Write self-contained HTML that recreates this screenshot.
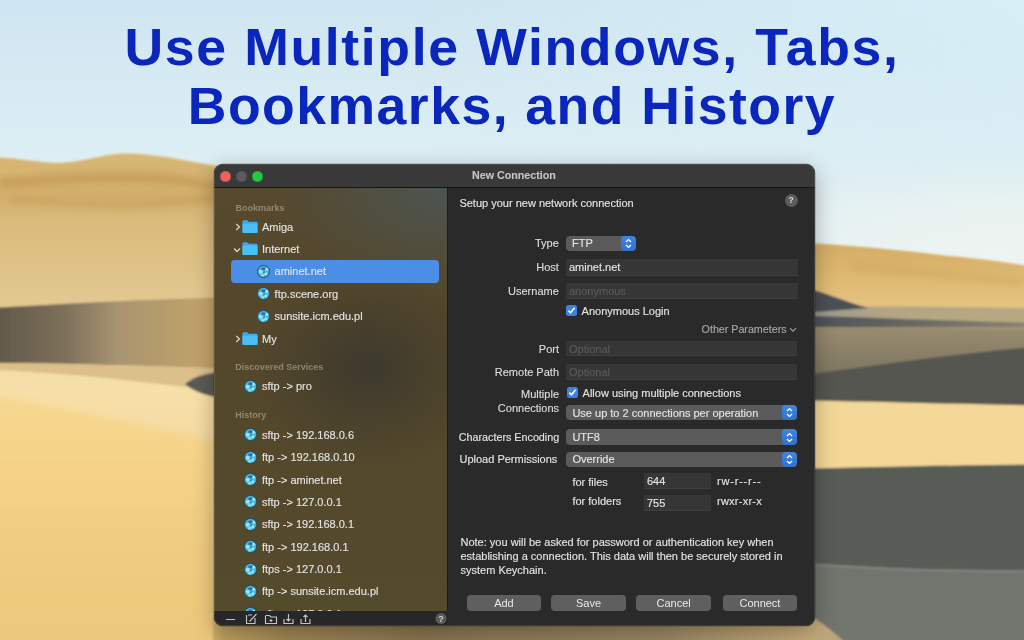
<!DOCTYPE html>
<html><head><meta charset="utf-8">
<style>
*{margin:0;padding:0;box-sizing:border-box}
html,body{width:1024px;height:640px;overflow:hidden}
body{position:relative;font-family:"Liberation Sans",sans-serif;background:#d8e8ee}
#bg{position:absolute;left:0;top:0;width:1024px;height:640px}
.title{position:absolute;left:0;width:1024px;text-align:center;font-weight:bold;font-size:51px;line-height:60px;color:#0a26bc;transform-origin:513px 0;white-space:nowrap}
#win{position:absolute;left:214px;top:164px;will-change:transform;width:601px;height:462px;border-radius:9px;overflow:hidden;background:#2a2a2a;box-shadow:0 6px 22px rgba(0,0,0,.3),0 0 0 0.5px rgba(0,0,0,.3)}
#win::after{content:"";position:absolute;left:0;top:0;right:0;bottom:0;border-radius:9px;box-shadow:inset 0 0 0 1px rgba(255,255,255,.1);pointer-events:none}
#tb{position:absolute;left:0;top:0;width:601px;height:24px;background:#3a393a;border-bottom:1px solid #161616}
.tl{position:absolute;top:6.5px;width:11px;height:11px;border-radius:50%}
#side{position:absolute;left:0;top:24px;width:234px;height:423px;border-right:1px solid #1c1c1a;background:radial-gradient(ellipse 120px 100px at 155px 180px,rgba(58,55,46,.9),rgba(58,55,46,.4) 50%,rgba(58,55,46,0)),radial-gradient(ellipse 170px 110px at 230px 0px,rgba(76,84,80,1),rgba(76,84,80,0)),linear-gradient(#56492e,#54472b 120px,#544a2c 424px)}
#sbar{position:absolute;left:0;top:447px;width:234px;height:15px;background:#272629}
#content{position:absolute;left:234px;top:24px;width:367px;height:438px;background:#2a2a2a}
.t{position:absolute;white-space:nowrap;font-size:11px;line-height:14px;color:#e2e2e2;-webkit-text-stroke:0.15px currentColor}
.lb{text-align:right;color:#dcdcdc}
.hdr{position:absolute;white-space:nowrap;font-size:9px;font-weight:bold;line-height:12px;color:rgba(190,185,170,.55)}
.ic{position:absolute;line-height:0}
.sel{position:absolute;background:#4a8ee6;border-radius:4px}
.fld{position:absolute;background:#363636;box-shadow:inset 0 -1px 0 #3f3f3f}
.pop{position:absolute;background:#5b5b5b;border-radius:4px;overflow:hidden}
.step{position:absolute;right:0;top:0;width:15px;height:100%;background:linear-gradient(#3f86e2,#3270cc);border-radius:4px}
.btn{position:absolute;background:#5f5f5f;border-radius:4px;color:#e8e8e8;font-size:11px;line-height:16px;text-align:center}
.help{position:absolute;width:13px;height:13px;border-radius:50%;background:#5c5c5c;color:#d8d8d8;font-size:9px;font-weight:bold;line-height:13px;text-align:center}
</style></head><body>
<svg id="bg" width="1024" height="640" viewBox="0 0 1024 640">
<defs>
<linearGradient id="sky" x1="0" y1="0" x2="0" y2="640" gradientUnits="userSpaceOnUse">
<stop offset="0" stop-color="#cfe5f1"/><stop offset="0.22" stop-color="#dbeef4"/><stop offset="0.42" stop-color="#e8f2f2"/><stop offset="1" stop-color="#eef3ee"/>
</linearGradient>
<linearGradient id="ldune" x1="0" y1="150" x2="0" y2="305" gradientUnits="userSpaceOnUse">
<stop offset="0" stop-color="#d8b876"/><stop offset="0.15" stop-color="#d6b472"/><stop offset="0.3" stop-color="#d2ae6a"/><stop offset="0.45" stop-color="#dabb7c"/><stop offset="0.75" stop-color="#dfc286"/><stop offset="1" stop-color="#e2c892"/>
</linearGradient>
<filter id="bl3" x="-20%" y="-50%" width="140%" height="200%"><feGaussianBlur stdDeviation="3"/></filter>
<linearGradient id="lshadow" x1="0" y1="0" x2="214" y2="0" gradientUnits="userSpaceOnUse">
<stop offset="0" stop-color="#625a4a"/><stop offset="0.3" stop-color="#7c705a"/><stop offset="0.55" stop-color="#a89470"/><stop offset="1" stop-color="#c4a468"/>
</linearGradient>
<linearGradient id="lsand" x1="0" y1="365" x2="0" y2="640" gradientUnits="userSpaceOnUse">
<stop offset="0" stop-color="#f2dca6"/><stop offset="0.1" stop-color="#f6e0a8"/><stop offset="0.45" stop-color="#f2d49a"/><stop offset="1" stop-color="#eaca7c"/>
</linearGradient>
<linearGradient id="rdune" x1="0" y1="243" x2="0" y2="308" gradientUnits="userSpaceOnUse">
<stop offset="0" stop-color="#d4ac66"/><stop offset="0.5" stop-color="#ddb870"/><stop offset="1" stop-color="#e4c482"/>
</linearGradient>
<linearGradient id="rgray" x1="0" y1="326" x2="0" y2="380" gradientUnits="userSpaceOnUse">
<stop offset="0" stop-color="#9a8c70"/><stop offset="1" stop-color="#7a7460"/>
</linearGradient>
<linearGradient id="bstrip" x1="190" y1="0" x2="860" y2="0" gradientUnits="userSpaceOnUse">
<stop offset="0" stop-color="#e6c47c"/><stop offset="0.05" stop-color="#c0a060"/><stop offset="0.15" stop-color="#a08654"/><stop offset="0.35" stop-color="#8a7650"/><stop offset="0.7" stop-color="#9a8862"/><stop offset="0.92" stop-color="#c8ac7a"/><stop offset="1" stop-color="#b0a080"/>
</linearGradient>
<linearGradient id="rstreak" x1="815" y1="0" x2="1024" y2="0" gradientUnits="userSpaceOnUse"><stop offset="0" stop-color="#4e5258"/><stop offset="0.5" stop-color="#6a6a64"/><stop offset="1" stop-color="#8a8270"/></linearGradient>
<linearGradient id="rband" x1="815" y1="0" x2="1024" y2="0" gradientUnits="userSpaceOnUse"><stop offset="0" stop-color="#9a9890"/><stop offset="0.35" stop-color="#b4a684"/><stop offset="1" stop-color="#b8a882"/></linearGradient>
<linearGradient id="skyh" x1="0" y1="0" x2="1024" y2="0" gradientUnits="userSpaceOnUse"><stop offset="0.4" stop-color="#d8eef6" stop-opacity="0"/><stop offset="1" stop-color="#d8eef6" stop-opacity="1"/></linearGradient>
<linearGradient id="skymg" x1="0" y1="0" x2="0" y2="200" gradientUnits="userSpaceOnUse"><stop offset="0" stop-color="#fff"/><stop offset="1" stop-color="#000"/></linearGradient>
<mask id="skym"><rect x="0" y="0" width="1024" height="200" fill="url(#skymg)"/></mask>
<radialGradient id="skyw"><stop offset="0" stop-color="#eef4f0" stop-opacity="1"/><stop offset="1" stop-color="#eef4f0" stop-opacity="0"/></radialGradient>
<linearGradient id="lsand2" x1="0" y1="400" x2="0" y2="640" gradientUnits="userSpaceOnUse"><stop offset="0" stop-color="#f6d890"/><stop offset="0.2" stop-color="#f6d48a"/><stop offset="0.6" stop-color="#f0cc80"/><stop offset="1" stop-color="#ecc87c"/></linearGradient>
<filter id="bl" x="-5%" y="-5%" width="110%" height="110%"><feGaussianBlur stdDeviation="1"/></filter>
</defs>
<rect width="1024" height="640" fill="url(#sky)"/>
<rect x="0" y="0" width="1024" height="200" fill="url(#skyh)" mask="url(#skym)"/>
<ellipse cx="1000" cy="250" rx="260" ry="90" fill="url(#skyw)"/>
<g filter="url(#bl)">
<path d="M-10,157 C20,158 40,163 60,163 C90,161 105,153 128,153.5 C160,154 190,162 240,170 L240,650 L-10,650Z" fill="url(#ldune)"/>
<g filter="url(#bl3)" opacity="0.55">
<path d="M0,178 C50,174 100,170 150,172 C180,174 200,180 220,184 L220,190 C190,186 160,182 120,182 C80,182 40,186 0,188Z" fill="#c09050"/>
<path d="M10,196 C60,200 110,204 150,200 C180,198 200,196 220,196 L220,202 C190,204 150,210 100,208 C60,206 30,204 10,202Z" fill="#c49a58"/>
</g>
<path d="M-10,308 C60,304 150,299 240,297 L240,369 C150,366 60,363 -10,363Z" fill="url(#lshadow)"/>
<path d="M-10,363 C60,363 150,366 240,369 L240,650 L-10,650Z" fill="#dcc08a"/>
<path d="M-10,370 C60,372 150,382 240,394 L240,650 L-10,650Z" fill="url(#lsand)"/>
<path d="M-10,394 C60,406 150,428 240,446 L240,650 L-10,650Z" fill="url(#lsand2)" filter="url(#bl3)"/>
<path d="M185,384 C195,376 205,372 240,371 L240,400 C215,399 195,393 185,384Z" fill="#5c5a56"/>
<path d="M790,242 C850,245 900,250 950,256 C980,259 1000,261 1034,267 L1034,650 L790,650Z" fill="url(#rdune)"/>
<g filter="url(#bl3)" opacity="0.3"><path d="M850,262 C900,266 960,272 1024,280 L1024,286 C960,280 900,274 850,270Z" fill="#c09858"/></g>
<path d="M790,307 C880,306 960,307 1034,308 L1034,650 L790,650Z" fill="url(#rband)"/>
<path d="M790,284 C820,290 840,300 868,308 L790,314Z" fill="#4c5056"/>
<path d="M790,315 C880,318 960,321 1034,323 L1034,328 C960,327 880,327 790,328Z" fill="url(#rstreak)"/>
<path d="M790,327 C880,327 960,328 1034,329 L1034,650 L790,650Z" fill="url(#rgray)"/>
<path d="M790,377 C880,365 960,353 1034,347 L1034,650 L790,650Z" fill="#54564f"/>
<path d="M790,400 C880,402 960,404 1034,405.5 L1034,650 L790,650Z" fill="#f4d898"/>
<path d="M790,469 C880,467 960,465 1034,464.5 L1034,650 L790,650Z" fill="#595b56"/>
<path d="M790,562 C850,566 900,570 1034,570.5 L1034,650 L790,650Z" fill="#72746e"/>
<path d="M790,563 C850,567 900,571 1034,571.5" stroke="#828680" stroke-width="2" fill="none"/>

<path d="M213,616 L812,616 C822,624 836,632 852,650 L213,650Z" fill="url(#bstrip)"/>
</g>
</svg>

<div class="title" style="top:17px;font-size:52px;letter-spacing:1.6px;transform:scaleX(1.03)">Use Multiple Windows, Tabs,</div>
<div class="title" style="top:77px;letter-spacing:1.4px;transform:scaleX(1.05)">Bookmarks, and History</div>
<div id="win">
  <div id="side"></div>
  <div id="content"></div>
  <div class="sel" style="left:17.0px;top:96.0px;width:208.0px;height:22.5px;"></div><div class="hdr" style="left:21.6px;top:37.6px">Bookmarks</div><div class="ic" style="left:20.599999999999994px;top:58.8px"><svg width="6" height="8" viewBox="0 0 6 8"><path d="M1.2,1 L4.5,4 L1.2,7" stroke="#d8d4c8" stroke-width="1.3" fill="none"/></svg></div><div class="ic" style="left:28.19999999999999px;top:55.8px"><svg width="16" height="14" viewBox="0 0 16 14"><path d="M0.5,1.6 Q0.5,0.3 1.7,0.3 L5.4,0.3 L6.8,1.7 L14.2,1.7 Q15.5,1.7 15.5,3 L15.5,12 Q15.5,13 14.5,13 L1.5,13 Q0.5,13 0.5,12Z" fill="#3aa6e6"/><path d="M0.5,3.4 L15.5,3.4 L15.5,12 Q15.5,13 14.5,13 L1.5,13 Q0.5,13 0.5,12Z" fill="#4cc0f6"/></svg></div><div class="t" style="left:48.0px;top:55.8px;">Amiga</div><div class="ic" style="left:18.80000000000001px;top:83.0px"><svg width="8" height="6" viewBox="0 0 8 6"><path d="M1,1.5 L4,4.5 L7,1.5" stroke="#d8d4c8" stroke-width="1.3" fill="none"/></svg></div><div class="ic" style="left:28.19999999999999px;top:78.2px"><svg width="16" height="14" viewBox="0 0 16 14"><path d="M0.5,1.6 Q0.5,0.3 1.7,0.3 L5.4,0.3 L6.8,1.7 L14.2,1.7 Q15.5,1.7 15.5,3 L15.5,12 Q15.5,13 14.5,13 L1.5,13 Q0.5,13 0.5,12Z" fill="#3aa6e6"/><path d="M0.5,3.4 L15.5,3.4 L15.5,12 Q15.5,13 14.5,13 L1.5,13 Q0.5,13 0.5,12Z" fill="#4cc0f6"/></svg></div><div class="t" style="left:48.0px;top:78.2px;">Internet</div><div class="ic" style="left:42.5px;top:100.7px"><svg width="13" height="13" viewBox="0 0 13 13"><circle cx="6.5" cy="6.5" r="6.1" fill="#4cb4d8" stroke="#1e4a56" stroke-width="0.9"/><circle cx="3.8" cy="6.8" r="2" fill="#96e4fa"/><circle cx="9.6" cy="4.2" r="1.5" fill="#a0ecfa"/><circle cx="8.6" cy="8.8" r="1.7" fill="#8ee6f0"/><circle cx="5.6" cy="10.2" r="1.4" fill="#90e0ee"/><ellipse cx="6.4" cy="3.8" rx="2.2" ry="1.5" fill="#2a6ec4"/><circle cx="7.2" cy="7.2" r="1" fill="#2a8aa8"/></svg></div><div class="t" style="left:60.6px;top:100.2px;">aminet.net</div><div class="ic" style="left:42.5px;top:123.3px"><svg width="13" height="13" viewBox="0 0 13 13"><circle cx="6.5" cy="6.5" r="6.1" fill="#4cb4d8" stroke="#1e4a56" stroke-width="0.9"/><circle cx="3.8" cy="6.8" r="2" fill="#96e4fa"/><circle cx="9.6" cy="4.2" r="1.5" fill="#a0ecfa"/><circle cx="8.6" cy="8.8" r="1.7" fill="#8ee6f0"/><circle cx="5.6" cy="10.2" r="1.4" fill="#90e0ee"/><ellipse cx="6.4" cy="3.8" rx="2.2" ry="1.5" fill="#2a6ec4"/><circle cx="7.2" cy="7.2" r="1" fill="#2a8aa8"/></svg></div><div class="t" style="left:60.6px;top:122.8px;">ftp.scene.org</div><div class="ic" style="left:42.5px;top:145.7px"><svg width="13" height="13" viewBox="0 0 13 13"><circle cx="6.5" cy="6.5" r="6.1" fill="#4cb4d8" stroke="#1e4a56" stroke-width="0.9"/><circle cx="3.8" cy="6.8" r="2" fill="#96e4fa"/><circle cx="9.6" cy="4.2" r="1.5" fill="#a0ecfa"/><circle cx="8.6" cy="8.8" r="1.7" fill="#8ee6f0"/><circle cx="5.6" cy="10.2" r="1.4" fill="#90e0ee"/><ellipse cx="6.4" cy="3.8" rx="2.2" ry="1.5" fill="#2a6ec4"/><circle cx="7.2" cy="7.2" r="1" fill="#2a8aa8"/></svg></div><div class="t" style="left:60.6px;top:145.2px;">sunsite.icm.edu.pl</div><div class="ic" style="left:20.599999999999994px;top:170.8px"><svg width="6" height="8" viewBox="0 0 6 8"><path d="M1.2,1 L4.5,4 L1.2,7" stroke="#d8d4c8" stroke-width="1.3" fill="none"/></svg></div><div class="ic" style="left:28.19999999999999px;top:167.8px"><svg width="16" height="14" viewBox="0 0 16 14"><path d="M0.5,1.6 Q0.5,0.3 1.7,0.3 L5.4,0.3 L6.8,1.7 L14.2,1.7 Q15.5,1.7 15.5,3 L15.5,12 Q15.5,13 14.5,13 L1.5,13 Q0.5,13 0.5,12Z" fill="#3aa6e6"/><path d="M0.5,3.4 L15.5,3.4 L15.5,12 Q15.5,13 14.5,13 L1.5,13 Q0.5,13 0.5,12Z" fill="#4cc0f6"/></svg></div><div class="t" style="left:48.0px;top:167.8px;">My</div><div class="hdr" style="left:21.3px;top:196.8px">Discovered Services</div><div class="ic" style="left:29.8px;top:215.9px"><svg width="13" height="13" viewBox="0 0 13 13"><circle cx="6.5" cy="6.5" r="6.1" fill="#4cb4d8" stroke="#1e4a56" stroke-width="0.9"/><circle cx="3.8" cy="6.8" r="2" fill="#96e4fa"/><circle cx="9.6" cy="4.2" r="1.5" fill="#a0ecfa"/><circle cx="8.6" cy="8.8" r="1.7" fill="#8ee6f0"/><circle cx="5.6" cy="10.2" r="1.4" fill="#90e0ee"/><ellipse cx="6.4" cy="3.8" rx="2.2" ry="1.5" fill="#2a6ec4"/><circle cx="7.2" cy="7.2" r="1" fill="#2a8aa8"/></svg></div><div class="t" style="left:48.0px;top:215.4px;">sftp -&gt; pro</div><div class="hdr" style="left:21.3px;top:245.0px">History</div><div class="ic" style="left:29.8px;top:264.2px"><svg width="13" height="13" viewBox="0 0 13 13"><circle cx="6.5" cy="6.5" r="6.1" fill="#4cb4d8" stroke="#1e4a56" stroke-width="0.9"/><circle cx="3.8" cy="6.8" r="2" fill="#96e4fa"/><circle cx="9.6" cy="4.2" r="1.5" fill="#a0ecfa"/><circle cx="8.6" cy="8.8" r="1.7" fill="#8ee6f0"/><circle cx="5.6" cy="10.2" r="1.4" fill="#90e0ee"/><ellipse cx="6.4" cy="3.8" rx="2.2" ry="1.5" fill="#2a6ec4"/><circle cx="7.2" cy="7.2" r="1" fill="#2a8aa8"/></svg></div><div class="t" style="left:48.0px;top:263.7px;">sftp -&gt; 192.168.0.6</div><div class="ic" style="left:29.8px;top:286.6px"><svg width="13" height="13" viewBox="0 0 13 13"><circle cx="6.5" cy="6.5" r="6.1" fill="#4cb4d8" stroke="#1e4a56" stroke-width="0.9"/><circle cx="3.8" cy="6.8" r="2" fill="#96e4fa"/><circle cx="9.6" cy="4.2" r="1.5" fill="#a0ecfa"/><circle cx="8.6" cy="8.8" r="1.7" fill="#8ee6f0"/><circle cx="5.6" cy="10.2" r="1.4" fill="#90e0ee"/><ellipse cx="6.4" cy="3.8" rx="2.2" ry="1.5" fill="#2a6ec4"/><circle cx="7.2" cy="7.2" r="1" fill="#2a8aa8"/></svg></div><div class="t" style="left:48.0px;top:286.1px;">ftp -&gt; 192.168.0.10</div><div class="ic" style="left:29.8px;top:309.0px"><svg width="13" height="13" viewBox="0 0 13 13"><circle cx="6.5" cy="6.5" r="6.1" fill="#4cb4d8" stroke="#1e4a56" stroke-width="0.9"/><circle cx="3.8" cy="6.8" r="2" fill="#96e4fa"/><circle cx="9.6" cy="4.2" r="1.5" fill="#a0ecfa"/><circle cx="8.6" cy="8.8" r="1.7" fill="#8ee6f0"/><circle cx="5.6" cy="10.2" r="1.4" fill="#90e0ee"/><ellipse cx="6.4" cy="3.8" rx="2.2" ry="1.5" fill="#2a6ec4"/><circle cx="7.2" cy="7.2" r="1" fill="#2a8aa8"/></svg></div><div class="t" style="left:48.0px;top:308.5px;">ftp -&gt; aminet.net</div><div class="ic" style="left:29.8px;top:331.4px"><svg width="13" height="13" viewBox="0 0 13 13"><circle cx="6.5" cy="6.5" r="6.1" fill="#4cb4d8" stroke="#1e4a56" stroke-width="0.9"/><circle cx="3.8" cy="6.8" r="2" fill="#96e4fa"/><circle cx="9.6" cy="4.2" r="1.5" fill="#a0ecfa"/><circle cx="8.6" cy="8.8" r="1.7" fill="#8ee6f0"/><circle cx="5.6" cy="10.2" r="1.4" fill="#90e0ee"/><ellipse cx="6.4" cy="3.8" rx="2.2" ry="1.5" fill="#2a6ec4"/><circle cx="7.2" cy="7.2" r="1" fill="#2a8aa8"/></svg></div><div class="t" style="left:48.0px;top:330.9px;">sftp -&gt; 127.0.0.1</div><div class="ic" style="left:29.8px;top:353.8px"><svg width="13" height="13" viewBox="0 0 13 13"><circle cx="6.5" cy="6.5" r="6.1" fill="#4cb4d8" stroke="#1e4a56" stroke-width="0.9"/><circle cx="3.8" cy="6.8" r="2" fill="#96e4fa"/><circle cx="9.6" cy="4.2" r="1.5" fill="#a0ecfa"/><circle cx="8.6" cy="8.8" r="1.7" fill="#8ee6f0"/><circle cx="5.6" cy="10.2" r="1.4" fill="#90e0ee"/><ellipse cx="6.4" cy="3.8" rx="2.2" ry="1.5" fill="#2a6ec4"/><circle cx="7.2" cy="7.2" r="1" fill="#2a8aa8"/></svg></div><div class="t" style="left:48.0px;top:353.3px;">sftp -&gt; 192.168.0.1</div><div class="ic" style="left:29.8px;top:376.1px"><svg width="13" height="13" viewBox="0 0 13 13"><circle cx="6.5" cy="6.5" r="6.1" fill="#4cb4d8" stroke="#1e4a56" stroke-width="0.9"/><circle cx="3.8" cy="6.8" r="2" fill="#96e4fa"/><circle cx="9.6" cy="4.2" r="1.5" fill="#a0ecfa"/><circle cx="8.6" cy="8.8" r="1.7" fill="#8ee6f0"/><circle cx="5.6" cy="10.2" r="1.4" fill="#90e0ee"/><ellipse cx="6.4" cy="3.8" rx="2.2" ry="1.5" fill="#2a6ec4"/><circle cx="7.2" cy="7.2" r="1" fill="#2a8aa8"/></svg></div><div class="t" style="left:48.0px;top:375.6px;">ftp -&gt; 192.168.0.1</div><div class="ic" style="left:29.8px;top:398.5px"><svg width="13" height="13" viewBox="0 0 13 13"><circle cx="6.5" cy="6.5" r="6.1" fill="#4cb4d8" stroke="#1e4a56" stroke-width="0.9"/><circle cx="3.8" cy="6.8" r="2" fill="#96e4fa"/><circle cx="9.6" cy="4.2" r="1.5" fill="#a0ecfa"/><circle cx="8.6" cy="8.8" r="1.7" fill="#8ee6f0"/><circle cx="5.6" cy="10.2" r="1.4" fill="#90e0ee"/><ellipse cx="6.4" cy="3.8" rx="2.2" ry="1.5" fill="#2a6ec4"/><circle cx="7.2" cy="7.2" r="1" fill="#2a8aa8"/></svg></div><div class="t" style="left:48.0px;top:398.0px;">ftps -&gt; 127.0.0.1</div><div class="ic" style="left:29.8px;top:420.9px"><svg width="13" height="13" viewBox="0 0 13 13"><circle cx="6.5" cy="6.5" r="6.1" fill="#4cb4d8" stroke="#1e4a56" stroke-width="0.9"/><circle cx="3.8" cy="6.8" r="2" fill="#96e4fa"/><circle cx="9.6" cy="4.2" r="1.5" fill="#a0ecfa"/><circle cx="8.6" cy="8.8" r="1.7" fill="#8ee6f0"/><circle cx="5.6" cy="10.2" r="1.4" fill="#90e0ee"/><ellipse cx="6.4" cy="3.8" rx="2.2" ry="1.5" fill="#2a6ec4"/><circle cx="7.2" cy="7.2" r="1" fill="#2a8aa8"/></svg></div><div class="t" style="left:48.0px;top:420.4px;">ftp -&gt; sunsite.icm.edu.pl</div><div class="ic" style="left:29.8px;top:443.3px"><svg width="13" height="13" viewBox="0 0 13 13"><circle cx="6.5" cy="6.5" r="6.1" fill="#4cb4d8" stroke="#1e4a56" stroke-width="0.9"/><circle cx="3.8" cy="6.8" r="2" fill="#96e4fa"/><circle cx="9.6" cy="4.2" r="1.5" fill="#a0ecfa"/><circle cx="8.6" cy="8.8" r="1.7" fill="#8ee6f0"/><circle cx="5.6" cy="10.2" r="1.4" fill="#90e0ee"/><ellipse cx="6.4" cy="3.8" rx="2.2" ry="1.5" fill="#2a6ec4"/><circle cx="7.2" cy="7.2" r="1" fill="#2a8aa8"/></svg></div><div class="t" style="left:48.0px;top:442.8px;">sftp -&gt; 127.0.0.1</div>
  <div class="t" style="left:245.4px;top:31.8px;">Setup your new network connection</div><div class="help" style="left:570.5px;top:29.5px">?</div><div class="t lb" style="right:256.2px;top:72.0px;">Type</div><div class="pop" style="left:352.0px;top:72.0px;width:69.5px;height:14.8px;"><div class="step"></div><svg width="15" height="15" viewBox="0 0 15 15" style="position:absolute;right:0;top:50%;margin-top:-7.5px"><path d="M5,6 L7.5,3.6 L10,6 M5,9 L7.5,11.4 L10,9" stroke="#fff" stroke-width="1.4" fill="none"/></svg></div><div class="t" style="left:358.0px;top:72.0px;">FTP</div><div class="t lb" style="right:256.2px;top:96.2px;">Host</div><div class="fld" style="left:352.0px;top:95.0px;width:232.0px;height:16.5px;"></div><div class="t" style="left:355.0px;top:96.2px;">aminet.net</div><div class="t lb" style="right:256.2px;top:119.6px;">Username</div><div class="fld" style="left:352.0px;top:118.8px;width:232.0px;height:15.8px;"></div><div class="t" style="left:355.0px;top:119.6px;color:#5a5a5a">anonymous</div><div class="ic" style="left:352px;top:141px"><svg width="11" height="11" viewBox="0 0 11 11"><rect x="0" y="0" width="11" height="11" rx="2.5" fill="#3b82e4"/><path d="M2.4,5.6 L4.5,7.8 L8.6,2.8" stroke="#fff" stroke-width="1.6" fill="none"/></svg></div><div class="t" style="left:367.6px;top:140.0px;">Anonymous Login</div><div class="t" style="left:487.6px;top:158.0px;color:#a6a6a6;font-size:10.7px">Other Parameters</div><div class="ic" style="left:575px;top:162.5px"><svg width="8" height="6" viewBox="0 0 8 6"><path d="M1,1.2 L4,4.2 L7,1.2" stroke="#a0a0a0" stroke-width="1.1" fill="none"/></svg></div><div class="t lb" style="right:256.0px;top:178.0px;">Port</div><div class="fld" style="left:352.0px;top:177.3px;width:231.0px;height:15.2px;"></div><div class="t" style="left:355.0px;top:178.0px;color:#5a5a5a">Optional</div><div class="t lb" style="right:256.0px;top:201.0px;">Remote Path</div><div class="fld" style="left:352.0px;top:200.0px;width:231.0px;height:15.5px;"></div><div class="t" style="left:355.0px;top:201.0px;color:#5a5a5a">Optional</div><div class="t lb" style="right:256.0px;top:222.7px;">Multiple</div><div class="t lb" style="right:256.0px;top:236.8px;">Connections</div><div class="ic" style="left:352.5px;top:223px"><svg width="11" height="11" viewBox="0 0 11 11"><rect x="0" y="0" width="11" height="11" rx="2.5" fill="#3b82e4"/><path d="M2.4,5.6 L4.5,7.8 L8.6,2.8" stroke="#fff" stroke-width="1.6" fill="none"/></svg></div><div class="t" style="left:368.6px;top:222.0px;">Allow using multiple connections</div><div class="pop" style="left:352.0px;top:241.3px;width:230.5px;height:15.2px;"><div class="step"></div><svg width="15" height="15" viewBox="0 0 15 15" style="position:absolute;right:0;top:50%;margin-top:-7.5px"><path d="M5,6 L7.5,3.6 L10,6 M5,9 L7.5,11.4 L10,9" stroke="#fff" stroke-width="1.4" fill="none"/></svg></div><div class="t" style="left:358.4px;top:241.6px;">Use up to 2 connections per operation</div><div class="t" style="left:244.8px;top:266.0px;font-size:10.75px">Characters Encoding</div><div class="pop" style="left:352.0px;top:265.3px;width:230.5px;height:15.5px;"><div class="step"></div><svg width="15" height="15" viewBox="0 0 15 15" style="position:absolute;right:0;top:50%;margin-top:-7.5px"><path d="M5,6 L7.5,3.6 L10,6 M5,9 L7.5,11.4 L10,9" stroke="#fff" stroke-width="1.4" fill="none"/></svg></div><div class="t" style="left:358.4px;top:266.0px;">UTF8</div><div class="t" style="left:245.5px;top:288.0px;">Upload Permissions</div><div class="pop" style="left:352.0px;top:287.7px;width:230.5px;height:15.3px;"><div class="step"></div><svg width="15" height="15" viewBox="0 0 15 15" style="position:absolute;right:0;top:50%;margin-top:-7.5px"><path d="M5,6 L7.5,3.6 L10,6 M5,9 L7.5,11.4 L10,9" stroke="#fff" stroke-width="1.4" fill="none"/></svg></div><div class="t" style="left:358.4px;top:288.2px;">Override</div><div class="t" style="left:358.4px;top:310.5px;">for files</div><div class="fld" style="left:430.0px;top:308.5px;width:67.0px;height:16.5px;"></div><div class="t" style="left:433.0px;top:310.0px;">644</div><div class="t" style="left:503.0px;top:310.0px;letter-spacing:0.8px">rw-r--r--</div><div class="t" style="left:358.4px;top:330.0px;">for folders</div><div class="fld" style="left:430.0px;top:331.0px;width:67.0px;height:15.5px;"></div><div class="t" style="left:433.0px;top:332.0px;">755</div><div class="t" style="left:503.0px;top:330.0px;letter-spacing:0.25px">rwxr-xr-x</div><div class="t" style="left:246.5px;top:371.4px;">Note: you will be asked for password or authentication key when</div><div class="t" style="left:246.5px;top:385.4px;">establishing a connection. This data will then be securely stored in</div><div class="t" style="left:246.5px;top:399.2px;">system Keychain.</div><div class="btn" style="left:252.5px;top:431.0px;width:74.9px;height:16.0px;">Add</div><div class="btn" style="left:337.3px;top:431.0px;width:74.5px;height:16.0px;">Save</div><div class="btn" style="left:422.4px;top:431.0px;width:74.6px;height:16.0px;">Cancel</div><div class="btn" style="left:508.5px;top:431.0px;width:74.9px;height:16.0px;">Connect</div>
  <div id="sbar"><svg width="233" height="15" viewBox="0 0 233 15" style="position:absolute;left:0;top:0">
<g stroke="#c4c4c4" stroke-width="1.15" fill="none">
<path d="M12,8.5 L21,8.5"/>
<path d="M32.5,4 L32.5,12.5 L41,12.5 L41,7 M34,4 L38,4 M35.5,10.5 L42.5,3"/>
<path d="M51.5,5 L51.5,12.5 L62.5,12.5 L62.5,6 L57,6 L55.5,4.5 L51.5,4.5 M57,8 L57,11 M55.5,9.5 L58.5,9.5"/>
<path d="M70,8 L70,12.5 L79,12.5 L79,8 M74.5,3 L74.5,10 M72.5,8 L74.5,10 L76.5,8"/>
<path d="M87,8 L87,12.5 L96,12.5 L96,8 M91.5,4 L91.5,11 M89.5,6 L91.5,4 L93.5,6"/>
</g>
<circle cx="227" cy="7.5" r="5.5" fill="#5a5a5a"/>
<text x="227" y="11" font-family="Liberation Sans" font-size="9" font-weight="bold" fill="#d0d0d0" text-anchor="middle">?</text>
</svg></div>
  <div id="tb">
    <div class="tl" style="left:5.8px;background:#ee625c;box-shadow:inset 0 0 0 0.6px #b04440"></div>
    <div class="tl" style="left:21.8px;background:#5c5c60;box-shadow:inset 0 0 0 0.6px #484850"></div>
    <div class="tl" style="left:37.7px;background:#2ac640;box-shadow:inset 0 0 0 0.6px #1a9030"></div>
    <div class="t" style="left:258px;top:4px;font-weight:bold;font-size:10.7px;color:#c4c4c4">New Connection</div>
  </div>
</div>
</body></html>
